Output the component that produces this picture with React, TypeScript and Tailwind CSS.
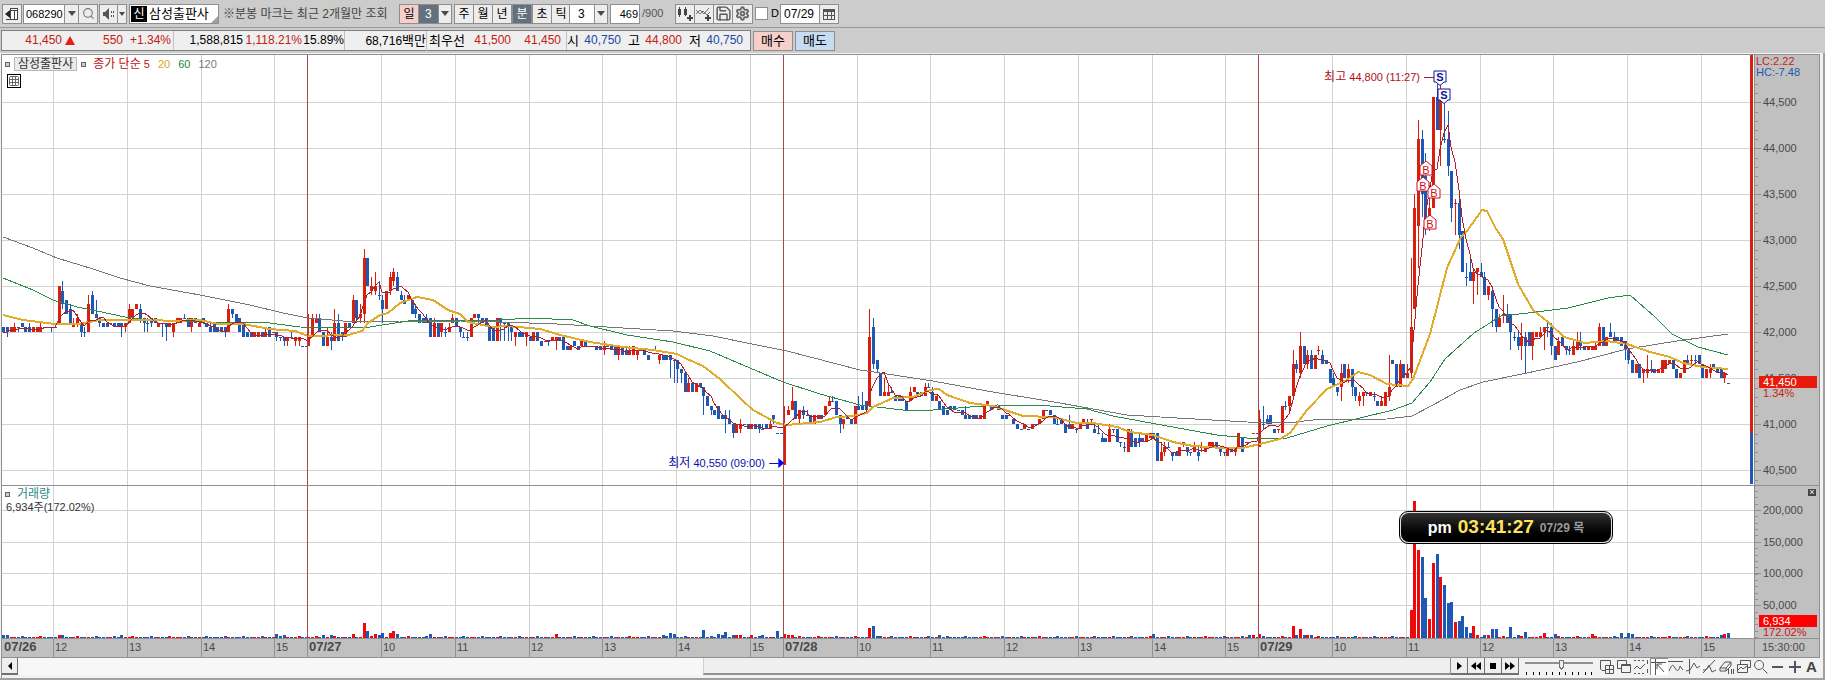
import React from 'react';
import { Search, Settings, Save, Calendar, Grid3x3 } from 'lucide-react';

// Every bar is "open,close[,upper wick,lower wick]" in 50 won steps above 40,000.
const DAY_26 =
    '41,40 41,40,0,1 40,41 40,41,1 41,41,0,1 42,41 41,40 41,40,1 40,41 40,41 40,41,1 41,41 41,41 41,41,0,1 41,41 42,50 49,46,2,1 47,44 45,42,1 41,42,1 42,43,1,1 42,40,0,1 40,40,1,1 40,46,2 48,44,1 44,43,3 43,42,0,1 42,41 42,41 42,42 42,41 42,41 42,41,0,2 41,42,0,1 42,45,1 43,45 45,46 45,43,1,1 43,42,0,2 42,42,1,2 43,42,0,1 43,42 41,42 42,42,0,3 42,41,0,3 41,42 40,42,0,1 42,43 42,43 43,43,1 43,41 41,43,0,1 43,42 41,42 43,42 42,41 41,40,1 42,40 41,40 41,40 41,40,0,1 40,45,1 45,44,0,1 44,42 43,40 42,39 40,39 40,39 39,40 39,40 40,39 39,40,1 41,39 40,40 40,39,0,1 39,39,0,1 39,38,0,1 38,39,0,1 39,39,1 38,39,0,1 38,39,0,1 37,37 37,37';
const DAY_27 =
    '37,39,5 39,43,1 42,43,1 43,40,1 40,37 37,39,2 39,38,1,2 38,42,3 42,38,2 40,39,0,1 39,42 42,41 42,47,1 47,43,0,1 43,44,2,1 44,56,2,2 56,50 49,50,2,1 49,50,3,1 48,48,3,1 47,45,1,3 45,49 49,52,1,1 51,53,1,1 52,49,1 48,47,1 47,46,1 47,48 47,44 45,44,1,1 44,42 43,42 43,42,1 43,39 39,42,1 42,39 40,42,0,1 40,40,1,1 40,41,1 42,43,1 43,41 41,40,0,1 39,39,1 39,39,1,1 39,43 43,44 44,43,0,1 43,42 43,41 41,38 41,38 38,43 43,42,0,4 42,42,0,4 42,41,0,3 41,40,0,2 39,40,0,2 40,39 40,39 39,40,0,2 39,38 38,40 40,38 38,37 38,38 38,38,0,1 38,39 38,39,0,2 39,38 39,36 37,36 36,37 38,37 37,36 37,38 38,37 37,37 37,37 37,36 37,36 36,37,1,1 37,37 37,36 37,35 35,37,0,1 37,35 36,35,1 35,36,1 35,37 35,36,0,1 36,36 36,35 35,34 36,36 36,36,1 34,35,0,1 35,34 35,34 35,34,0,4 34,34,0,5 34,32,0,3 32,31,0,2 31,27 27,29,1 29,27 27,29 29,28 28,26,0,4 26,24 24,23,0,1 23,22 24,21 22,21 22,21,1,3 21,20,2 20,18,0,1 18,20 19,20,1,1 20,20 20,19 19,20 20,19 20,19,0,1 19,19,1 20,19 19,20,1 22,21,0,1 18,18 18,18';
const DAY_28 =
    '11,20,4 22,23,1 23,25,3 25,21 21,23,0,1 23,22,1,1 22,22,1 22,20 20,22 21,22 22,21 22,24 24,25,1 25,25,1 25,22 22,20,0,2 20,21,0,1 22,21 21,20 20,24 24,23,2 24,23,3 25,23 24,39,6 41,33,2,1 34,32,0,1 31,26 26,27,3 26,27,2 27,27,1 26,25 26,25 26,25 25,23 25,27,1 27,28 27,26 27,26 26,28,1 28,28,1 27,25,1 25,26 25,23 24,22 23,22 24,23 24,23 23,23 23,22 22,21,2 22,21 22,21 22,21 21,22 21,24 24,25 24,23 24,24 24,23 22,21 22,21 22,22 21,20 20,19 19,19 19,20 19,19 19,20 20,20 20,21 21,23 23,23 23,22 22,20 20,20,1 21,20 20,18 20,19,2 19,20 19,19,0,1 19,20 20,21 20,19,1 21,21,0,1 19,18,1 18,18,2 17,16,1 17,16 16,19,1 19,19,0,1 19,16 16,16,0,1 15,15,1,1 14,19 18,15,1 17,15 17,16,1,1 17,16 16,18 17,18 18,17 18,12 12,14,2 14,15,1,1 15,15,1 14,13,0,1 14,13 13,15 16,16,0,1 15,14,0,1 14,14,0,1 14,15,1 14,13,1,1 15,15,1,1 14,15 15,16 15,16 16,15 15,14,0,1 14,14,0,1 13,15 15,14 14,15,0,1 15,18 17,14 16,16 16,16 18,18 18,18';
const DAY_29 =
    '15,21,2 20,20,4,1 21,20,1 22,20 19,18 19,19,0,1 18,24 24,24,1,1 24,26,0,1 26,33,3 33,32,1,1 31,37,3,1 37,33 33,35,1,1 35,32,1 32,35 36,36,1,1 35,33,1 34,33 32,29 30,28,1 28,27,0,1 28,31,2,3 33,30 30,32,1,1 32,28,0,2 28,26,0,1 25,26,1,1 26,27,0,2 27,27,0,1 26,27 26,26,1,1 25,24 24,25,1 24,27 26,28,7,1 34,33 33,28 28,33,1 33,30 30,31,2 31,41,15,1 45,67,3 63,82,4,9 82,70,2,5 74,65,5,4 65,67,5,3 67,91 91,84,3 84,92,4,8 82,82,9,1 82,76,6,2 75,67,0,3 68,68,1,7 68,61,2,3 62,53 52,52,3,2 53,51,4 51,53,1,5 53,54,0,5 53,52,2 52,48,1 48,50,0,1 49,45,1,4 45,41,0,1 41,43,1 44,44,4,2 44,42,2 44,40,0,4 39,39,1,1 39,37,1,1 37,39,3,3 39,37,1,6 40,37 37,40,0,3 39,40 39,40,1 40,41,0,4 41,41,1,2 41,37,1,2 37,34 35,38,1 39,37 37,36,0,1 36,36,1,1 35,37,1 36,38,2 38,37,2,1 37,36 36,37 36,37 36,37,1 37,41,1 41,37 37,39 40,39,2 39,38,1 39,38 39,37 38,36,0,2 36,34,0,1 34,31 31,33 33,30 31,32,0,2 31,32,3,1 32,32,2,1 32,31 31,32 31,34 32,34 33,34 34,32 32,30 30,31 31,34 34,33,1 34,34,1,1 34,34,1,1 35,33 33,30 30,32 31,32,1,1 33,32 32,31 32,30 30,31,0,1 29,29';

// Volume bars that stand out, keyed by bar number of the session (height in px).
const VOLUMES: Record<number, number>[] = [
    { 0: 3, 1: 3, 15: 3, 16: 3, 32: 3, 74: 4, 76: 3 },
    { 4: 3, 6: 3, 12: 4, 15: 15, 16: 7, 18: 4, 19: 3, 20: 5, 22: 5, 23: 7, 24: 4, 33: 4, 67: 4, 96: 3, 98: 5, 99: 4, 107: 8, 109: 2, 111: 4, 112: 3, 113: 6, 115: 3, 116: 3, 117: 3, 120: 3, 123: 3, 127: 7 },
    { 0: 4, 1: 3, 2: 3, 23: 10, 24: 12, 25: 2, 26: 2, 42: 3, 100: 4, 126: 3, 127: 3 },
    { 0: 4, 1: 2, 9: 12, 10: 3, 11: 9, 12: 3, 13: 3, 14: 3, 41: 28, 42: 137, 43: 88, 44: 81, 45: 40, 46: 19, 47: 75, 48: 84, 49: 61, 50: 53, 51: 35, 52: 36, 53: 16, 54: 17, 55: 22, 56: 11, 57: 5, 58: 12, 59: 3, 61: 3, 62: 3, 63: 9, 64: 9, 68: 11, 70: 3, 72: 6, 77: 5, 80: 4, 90: 4, 98: 5, 100: 5, 101: 4, 125: 3, 126: 4, 127: 5 },
];

const MA20 =
    '3,315 23,320 47,323 55,324 78,324 100,320 153,320 173,321 200,320 218,324 243,324 270,329 295,331 308,336 348,335 362,331 368,323 380,315 388,313 400,303 417,297 433,300 448,310 460,314 468,322 492,327 507,326 540,329 560,335 590,342 623,347 653,350 677,354 687,359 703,366 720,379 743,401 753,410 777,423 787,425 820,422 837,417 853,416 867,413 873,407 893,398 913,397 930,390 939,389 947,395 970,403 993,406 1023,416 1053,417 1077,423 1093,423 1117,427 1130,432 1153,435 1173,442 1193,446 1223,448 1243,448 1260,444 1280,439 1290,433 1307,410 1327,389 1347,380 1358,372 1370,375 1387,384 1408,386 1413,379 1430,334 1447,268 1461,237 1467,231 1482,210 1487,211 1496,229 1503,239 1518,284 1533,310 1548,322 1564,337 1585,343 1607,341 1627,344 1650,352 1670,357 1683,363 1703,367 1728,369';
const MA60 =
    '3,278 33,290 53,300 77,307 97,311 125,317 150,320 210,322 262,322 300,327 345,328 370,327 395,323 415,320 460,320 500,320 530,318 573,320 590,326 627,335 673,342 710,351 750,368 783,382 820,394 860,405 903,410 933,410 970,407 997,405 1050,406 1087,409 1113,416 1167,426 1217,435 1247,438 1287,438 1327,426 1360,418 1393,410 1412,403 1430,382 1445,359 1474,333 1501,316 1528,313 1568,308 1608,298 1630,295 1655,317 1672,334 1698,347 1728,355';
const MA120 =
    '3,237 33,248 57,258 93,269 120,278 150,286 200,295 250,305 283,313 308,318 355,322 400,321 460,321 500,322 557,324 623,328 673,331 713,336 747,343 787,351 860,370 887,374 933,381 987,391 1060,403 1093,409 1127,415 1177,418 1247,422 1287,423 1313,420 1387,419 1412,416 1433,405 1460,390 1483,382 1527,373 1577,362 1627,349 1677,341 1728,334';

const RED = '#d8200f';
const BLUE = '#1c58b4';
const LEFT = 2;
const WIDTH = 1752;
const STEP = 3.69;

const HOURS = [
    { x: 2, label: '07/26', day: true },
    { x: 53, label: '12' },
    { x: 127, label: '13' },
    { x: 201, label: '14' },
    { x: 274, label: '15' },
    { x: 307, label: '07/27', day: true },
    { x: 381, label: '10' },
    { x: 455, label: '11' },
    { x: 529, label: '12' },
    { x: 602, label: '13' },
    { x: 676, label: '14' },
    { x: 750, label: '15' },
    { x: 783, label: '07/28', day: true },
    { x: 857, label: '10' },
    { x: 930, label: '11' },
    { x: 1004, label: '12' },
    { x: 1078, label: '13' },
    { x: 1152, label: '14' },
    { x: 1225, label: '15' },
    { x: 1258, label: '07/29', day: true },
    { x: 1332, label: '10' },
    { x: 1406, label: '11' },
    { x: 1480, label: '12' },
    { x: 1553, label: '13' },
    { x: 1627, label: '14' },
    { x: 1701, label: '15' },
];

const priceY = (step: number) => Math.round(332 - (step - 40) * 4.6);
const percent = (x: number) => `${((x - LEFT) / WIDTH) * 100}%`;

const parseDay = (text: string, start: number, day: number) =>
    text.split(' ').map((token, i) => {
        const [open, close, up = 0, down = 0] = token.split(',').map(Number);
        return {
            x: Math.round(start + i * STEP),
            open,
            close,
            high: Math.max(open, close) + up,
            low: Math.min(open, close) - down,
            volume: VOLUMES[day][i] ?? ((i * 7 + day) % 5 === 0 ? 2 : 1),
        };
    });

const bars = [
    ...parseDay(DAY_26, 3.3, 0),
    ...parseDay(DAY_27, 308.4, 1),
    ...parseDay(DAY_28, 784.4, 2),
    ...parseDay(DAY_29, 1259.4, 3),
];

const barColor = (i: number) => {
    const bar = bars[i];
    if (bar.close !== bar.open) return bar.close > bar.open ? RED : BLUE;
    return i > 0 && bar.close > bars[i - 1].close ? RED : BLUE;
};

const MA5 = bars
    .map((bar, i) => {
        const part = bars.slice(Math.max(0, i - 4), i + 1);
        const mean = part.reduce((sum, b) => sum + b.close, 0) / part.length;
        return `${bar.x},${priceY(mean)}`;
    })
    .join(' ');

const GridLines = ({ rows, top, height }: { rows: number[]; top: number; height: number }) => (
    <g>
        {HOURS.slice(1)
            .filter((h) => !h.day)
            .map((h) => (
                <rect key={h.x} x={h.x} y={top} width={1} height={height} fill="#d2d2d2" />
            ))}
        {rows.map((y) => (
            <rect key={y} x={LEFT} y={y} width={WIDTH} height={1} fill="#d2d2d2" />
        ))}
    </g>
);

const DayLines = ({ top, height }: { top: number; height: number }) => (
    <g>
        {[307, 783, 1258].map((x) => (
            <rect key={x} x={x} y={top} width={1} height={height} fill="#a84848" />
        ))}
    </g>
);

const PriceChart = () => (
    <svg
        viewBox="2 55 1752 430"
        preserveAspectRatio="none"
        shapeRendering="crispEdges"
        className="block h-[430px] w-full"
    >
        <GridLines rows={[102, 148, 194, 240, 286, 332, 378, 424, 470]} top={55} height={430} />
        {bars.map((bar, i) => {
            const top = priceY(Math.max(bar.open, bar.close));
            const bottom = priceY(Math.min(bar.open, bar.close));
            const high = priceY(bar.high);
            return (
                <g key={i} fill={barColor(i)}>
                    <rect x={bar.x} y={high} width={1} height={Math.max(1, priceY(bar.low) - high)} />
                    <rect x={bar.x - 1} y={top} width={3} height={Math.max(1, bottom - top)} />
                </g>
            );
        })}
        <g fill="none">
            <polyline points={MA120} stroke="#777" />
            <polyline points={MA60} stroke="#2b8a4b" />
            <polyline points={MA20} stroke="#e0ab28" strokeWidth={2} />
            <polyline points={MA5} stroke="#b01f2a" />
        </g>
        <DayLines top={55} height={430} />
        <rect x={1750} y={55} width={3} height={378} fill={RED} />
        <rect x={1750} y={433} width={3} height={51} fill={BLUE} />
    </svg>
);

const VolumeChart = () => (
    <svg
        viewBox="2 486 1752 152"
        preserveAspectRatio="none"
        shapeRendering="crispEdges"
        className="block h-[152px] w-full"
    >
        <GridLines rows={[510, 542, 573, 605]} top={486} height={152} />
        {bars.map((bar, i) => (
            <rect
                key={i}
                x={bar.x - 1}
                y={638 - bar.volume}
                width={3}
                height={bar.volume}
                fill={barColor(i) === RED ? '#ee0a0a' : BLUE}
            />
        ))}
        <DayLines top={486} height={152} />
    </svg>
);

const Marker = ({ x, y, type }: { x: number; y: number; type: 'B' | 'S' }) => (
    <div
        className={`absolute -ml-[7px] flex h-4 w-[14px] justify-center ${type === 'B' ? 'text-[#d0101c]' : 'text-[#10109a]'}`}
        style={{ left: percent(x), top: y }}
    >
        <svg viewBox="0 0 14 16" className="absolute inset-0 h-4 w-[14px]">
            <path
                d={type === 'B' ? 'M7 1 L13 6 V15 H1 V6 Z' : 'M1 1 H13 V12 H11 L7 15.5 L3 12 H1 Z'}
                fill="#fff"
                stroke="currentColor"
                strokeWidth={1}
            />
        </svg>
        <span
            className={`relative text-[11px] leading-3 ${type === 'B' ? 'pt-1' : 'pt-px font-bold'}`}
        >
            {type}
        </span>
    </div>
);

const Axis = ({
    labels,
    ticks,
    className,
    children,
}: {
    labels: { y: number; text: string }[];
    ticks: number[];
    className: string;
    children?: React.ReactNode;
}) => (
    <div
        className={`relative w-[66px] shrink-0 border-l border-r border-[#909090] bg-[#c0c0c0] text-[#4a4a4a] ${className}`}
    >
        {ticks.map((y) => (
            <div key={y} className="absolute left-0 h-px w-[3px] bg-[#909090]" style={{ top: y }} />
        ))}
        {labels.map(({ y, text }) => (
            <div key={text} className="absolute left-0 flex h-3 items-center gap-[2px]" style={{ top: y - 6 }}>
                <i className="h-px w-[6px] bg-[#909090]" />
                {text}
            </div>
        ))}
        {children}
    </div>
);

const ToolButton = ({
    label,
    className = '',
    children,
}: {
    label?: string;
    className?: string;
    children: React.ReactNode;
}) => (
    <button
        aria-label={label}
        className={`flex h-5 items-center justify-center border border-[#8e8e8e] ${className || 'w-5 bg-[#ededed]'}`}
    >
        {children}
    </button>
);

const Caret = () => <i className="border-x-4 border-t-[5px] border-x-transparent border-t-[#4a4a4a]" />;

const CycleSelect = ({ label, className, width }: { label: string; className: string; width: string }) => (
    <div className={`relative -ml-px h-5 border border-[#8e8e8e] ${width}`}>
        <select
            aria-label={label}
            defaultValue="3"
            className={`block h-full w-full appearance-none text-[12px] leading-4 outline-none ${className}`}
        >
            <option>1</option>
            <option>3</option>
            <option>5</option>
        </select>
        <span className="pointer-events-none absolute inset-y-0 right-0 flex w-[13px] items-center justify-center border-l border-[#8e8e8e] bg-[#ededed]">
            <Caret />
        </span>
    </div>
);

const PERIODS = ['주', '월', '년', '분', '초', '틱'];

const Toolbar = () => (
    <div className="flex h-7 items-center border-b border-[#9a9a9a] pl-[2px] text-[12px] text-black">
        <ToolButton label="패널">
            <svg viewBox="0 0 14 14" className="h-[14px] w-[14px] shrink-0" fill="none" stroke="#444">
                <rect x="5.5" y="1.5" width="7" height="11" fill="#fff" />
                <path d="M5.5 3.5h7M9.5 3.500v9M1 12.500h5" />
                <path d="M5 3v8L0 7z" fill="#222" stroke="none" />
            </svg>
        </ToolButton>
        <input
            aria-label="종목코드"
            defaultValue="068290"
            className="ml-px h-5 w-[42px] border border-[#8e8e8e] bg-white pl-[2px] text-[11px] outline-none"
        />
        <ToolButton label="종목 목록" className="-ml-px w-[15px] bg-[#ededed]">
            <Caret />
        </ToolButton>
        <ToolButton label="종목 검색" className="-ml-px w-5 bg-[#ededed]">
            <Search size={13} color="#777" />
        </ToolButton>
        <ToolButton label="소리" className="ml-px w-[19px] bg-[#ededed]">
            <svg viewBox="0 0 14 14" className="h-[14px] w-[14px] shrink-0" fill="#555">
                <path d="M1 5h2l4-4v12L3 9H1zM9 4h1v2H9zM11 4h1v2h-1zM9 8h1v2H9zM11 8h1v2h-1z" />
            </svg>
        </ToolButton>
        <ToolButton label="소리 설정" className="-ml-px w-[10px] bg-[#ededed]">
            <i className="border-x-[3px] border-t-4 border-x-transparent border-t-[#4a4a4a]" />
        </ToolButton>
        <div className="relative ml-[2px] flex h-5 w-[90px] items-center border border-[#8e8e8e] bg-white pl-px">
            <span className="flex h-4 w-4 items-center justify-center bg-black text-white">신</span>
            <span className="pl-[2px] text-[13px]">삼성출판사</span>
            <i className="absolute right-0 bottom-0 border-b-[7px] border-l-[7px] border-b-[#a0a0a0] border-l-transparent" />
        </div>
        <span className="w-[180px] pl-1 whitespace-nowrap text-[#444]">※분봉 마크는 최근 2개월만 조회</span>
        <ToolButton className="w-5 bg-[#f5cfca]">일</ToolButton>
        <CycleSelect label="일 주기" className="bg-[#63707d] pl-[6px] text-white" width="w-[34px]" />
        <div className="ml-[2px] flex">
            {PERIODS.map((period) => (
                <ToolButton
                    key={period}
                    className={period === '분' ? 'ml-px w-5 bg-[#63707d] text-white' : '-mr-px w-5 bg-[#ededed]'}
                >
                    {period}
                </ToolButton>
            ))}
        </div>
        <CycleSelect label="분 주기" className="bg-white pl-2" width="w-[39px]" />
        <input
            aria-label="봉 개수"
            defaultValue="469"
            className="ml-[2px] h-5 w-[30px] border border-[#8e8e8e] bg-white pr-px text-right text-[11px] outline-none"
        />
        <span className="w-[35px] pl-[2px] text-[11px] text-[#555]">/900</span>
        <ToolButton label="봉 추가">
            <svg viewBox="0 0 16 16" className="h-4 w-4 shrink-0" fill="#444">
                <path d="M1 3h3v6H1zM2 1h1v10H2zM7 3h3v6H7zM8 1h1v9H8zM10 11h2v-2h2v2h2v2h-2v2h-2v-2h-2z" />
            </svg>
        </ToolButton>
        <ToolButton label="지표 추가" className="-ml-px w-5 bg-[#ededed]">
            <svg viewBox="0 0 16 16" className="h-4 w-4 shrink-0" fill="none" stroke="#777">
                <path d="M0 8l4-4 4 4 5-6M0 4l4 4 3-3 4 4 3-3" />
                <path d="M9 12h6M12 9v6" stroke="#444" strokeWidth="2" />
            </svg>
        </ToolButton>
        <ToolButton label="저장" className="-ml-px w-5 bg-[#ededed]">
            <Save size={17} color="#555" strokeWidth={2} className="shrink-0" />
        </ToolButton>
        <ToolButton label="설정" className="-ml-px w-[21px] bg-[#ededed]">
            <Settings size={15} color="#666" strokeWidth={3} className="shrink-0" />
        </ToolButton>
        <label className="ml-[2px] flex items-center gap-[3px] text-[11px]">
            <input type="checkbox" className="h-[13px] w-[13px] appearance-none border border-[#8e8e8e] bg-white" />
            D
        </label>
        <input
            aria-label="날짜"
            defaultValue="07/29"
            className="ml-px h-5 w-10 border border-[#8e8e8e] bg-white pl-[3px] text-[12px] outline-none"
        />
        <ToolButton label="달력" className="-ml-px w-5 bg-[#ededed]">
            <svg viewBox="0 0 12 12" className="h-3 w-3 shrink-0" fill="none" stroke="#555" shapeRendering="crispEdges">
                <path d="M0 1h12v3H0z" fill="#555" stroke="none" />
                <path d="M.5 1.500h11v10H.5zM.5 7.500h11M4.500 4v7M8.500 4v7" />
            </svg>
        </ToolButton>
    </div>
);

const QuoteBar = () => (
    <div className="flex h-[25px] items-center gap-[2px] pl-px text-[12px] text-black">
        <div className="flex h-[21px] items-center border border-[#808080] bg-[#efefef] leading-[19px] whitespace-nowrap">
            <div className="flex w-[172px] items-center border-r border-[#c0c0c0] text-[#c22014]">
                <span className="w-[60px] text-right">41,450</span>
                <i className="ml-[3px] border-x-[5px] border-b-[9px] border-x-transparent border-b-[#e02010]" />
                <span className="w-12 text-right">550</span>
                <span className="w-12 text-right">+1.34%</span>
            </div>
            <div className="flex w-[171px] border-r border-[#c0c0c0]">
                <span className="w-[69px] text-right">1,588,815</span>
                <span className="w-[59px] text-right text-[#c22014]">1,118.21%</span>
                <span className="w-[42px] text-right">15.89%</span>
            </div>
            <div className="w-[82px] border-r border-[#c0c0c0] text-right">
                68,716<span className="text-[13px]">백만</span>
            </div>
            <div className="flex w-[140px] border-r border-[#c0c0c0] pl-[2px]">
                <span className="w-9 text-[13px]">최우선</span>
                <span className="w-[46px] text-right text-[#c22014]">41,500</span>
                <span className="w-[50px] text-right text-[#c22014]">41,450</span>
            </div>
            <div className="flex w-[183px]">
                <span className="w-[14px] text-[13px]">시</span>
                <span className="w-10 text-right text-[#1c4aa6]">40,750</span>
                <span className="ml-[7px] w-[14px] text-[13px]">고</span>
                <span className="w-10 text-right text-[#c22014]">44,800</span>
                <span className="ml-[7px] w-[14px] text-[13px]">저</span>
                <span className="w-10 text-right text-[#1c4aa6]">40,750</span>
            </div>
        </div>
        <button className="h-5 w-10 border border-[#8e8e8e] bg-[#f5cfca] text-[13px] leading-4">매수</button>
        <button className="h-5 w-10 border border-[#8e8e8e] bg-[#c5dcf3] text-[13px] leading-4">매도</button>
    </div>
);

const Square = () => <i className="h-[5px] w-[5px] border border-[#666] bg-[#ccc]" />;

const PricePanel = () => (
    <div className="flex h-[431px] border-b border-[#909090]">
        <div className="relative min-w-0 flex-1 bg-white">
            <PriceChart />
            <div className="absolute top-[2px] left-[3px] flex items-center gap-1 text-[11px] leading-3">
                <Square />
                <span className="border border-[#b8b8b8] bg-[#ebebeb] px-[3px] text-[12px] text-[#333]">삼성출판사</span>
                <Square />
                <span className="pl-[3px] text-[#c01020]">
                    <span className="text-[12px]">종가 단순</span> 5
                </span>
                <span className="pl-1 text-[#d9a520]">20</span>
                <span className="pl-1 text-[#1c8a3c]">60</span>
                <span className="pl-1 text-[#777]">120</span>
            </div>
            <button
                aria-label="표 보기"
                className="absolute top-[19px] left-[5px] flex h-[14px] w-[14px] items-center justify-center border border-black bg-white"
            >
                <Grid3x3 size={12} color="#666" strokeWidth={2} className="shrink-0" />
            </button>
            <div
                className="absolute top-[14px] flex -translate-x-full items-center gap-1 text-[11px] leading-4 whitespace-nowrap text-[#b01020]"
                style={{ left: percent(1434) }}
            >
                <span>
                    <span className="text-[12px]">최고</span> 44,800 (11:27)
                </span>
                <i className="h-px w-[10px] bg-[#b01020]" />
            </div>
            <div
                className="absolute top-[400px] flex -translate-x-full items-center text-[11px] leading-4 whitespace-nowrap text-[#0c0cb0]"
                style={{ left: percent(784) }}
            >
                <span className="pr-1">
                    <span className="text-[12px]">최저</span> 40,550 (09:00)
                </span>
                <i className="h-px w-[9px] bg-[#0c0cb0]" />
                <i className="border-y-[5px] border-l-[6px] border-y-transparent border-l-[#0505f0]" />
            </div>
            <Marker x={1426} y={105} type="B" />
            <Marker x={1423} y={121} type="B" />
            <Marker x={1434} y={128} type="B" />
            <Marker x={1430} y={159} type="B" />
            <Marker x={1440} y={15} type="S" />
            <Marker x={1444} y={33} type="S" />
        </div>
        <Axis
            className="text-[11px]"
            ticks={Array.from({ length: 44 }, (_, i) => 29 + Math.round(i * 9.2)).filter((y) => y < 428)}
            labels={[44500, 44000, 43500, 43000, 42500, 42000, 41500, 41000, 40500].map((price, i) => ({
                y: 47 + i * 46,
                text: price.toLocaleString('en-US'),
            }))}
        >
            <div className="absolute top-px left-px leading-[11px]">
                <div className="text-[#c81e14]">LC:2.22</div>
                <div className="text-[#1c58b4]">HC:-7.48</div>
            </div>
            <div className="absolute top-[321px] left-1 h-3 w-[58px] bg-[#e81a0a] pl-1 leading-3 text-white">
                41,450
            </div>
            <div className="absolute top-[333px] left-2 leading-[10px] text-[#c81e14]">1.34%</div>
        </Axis>
    </div>
);

const Clock = () => (
    <div
        className="absolute top-[25px] flex h-[33px] w-[214px] items-center justify-center rounded-[9px] border border-black bg-[#ddd] p-px"
        style={{ left: percent(1399) }}
    >
        <div className="flex h-full w-full items-center justify-center gap-[6px] rounded-lg bg-linear-to-b from-[#333] to-black font-bold">
            <span className="text-[16px] text-white">pm</span>
            <span className="text-[19px] text-[#ffe45a]">03:41:27</span>
            <span className="text-[12px] text-[#9a9a9a]">07/29 목</span>
        </div>
    </div>
);

const VolumePanel = () => (
    <div className="flex h-[153px] border-b border-[#909090]">
        <div className="relative min-w-0 flex-1 bg-white">
            <VolumeChart />
            <div className="absolute top-[2px] left-[3px] flex items-center gap-[7px] text-[12px] leading-3 text-[#2b8a8a]">
                <Square />
                거래량
            </div>
            <div className="absolute top-[15px] left-1 text-[11px] leading-3 text-[#333]">6,934주(172.02%)</div>
            <Clock />
        </div>
        <Axis
            className="text-[11px]"
            ticks={Array.from({ length: 24 }, (_, i) => 5 + Math.round(i * 6.35))}
            labels={[
                { y: 24, text: '200,000' },
                { y: 56, text: '150,000' },
                { y: 87, text: '100,000' },
                { y: 119, text: '50,000' },
            ]}
        >
            <button
                aria-label="닫기"
                className="absolute top-[3px] right-[3px] flex h-[7px] w-2 items-center justify-center bg-[#444] text-[9px] leading-[7px] text-white"
            >
                ×
            </button>
            <div className="absolute top-[129px] left-1 h-3 w-[58px] bg-[#ff0000] pl-1 leading-3 text-white">6,934</div>
            <div className="absolute top-[141px] left-2 leading-[10px] text-[#d01010]">172.02%</div>
        </Axis>
    </div>
);

const TimeAxis = () => (
    <div className="flex h-[19px] border-b border-[#909090] bg-[#c0c0c0] text-[11px] leading-4 text-[#4a4a4a]">
        <div className="relative min-w-0 flex-1">
            {HOURS.map((h) => (
                <span
                    key={h.x}
                    className={`absolute inset-y-0 border-l pl-px ${h.day ? 'text-[13px] font-bold' : ''} ${h.x === 2 ? 'border-transparent' : 'border-[#909090]'}`}
                    style={{ left: percent(h.x) }}
                >
                    {h.label}
                </span>
            ))}
        </div>
        <div className="w-[66px] shrink-0 border-x border-[#909090] pl-[7px]">15:30:00</div>
    </div>
);

const PLAYBACK = [
    { label: '재생', path: 'M5 3l5 4-5 4z' },
    { label: '뒤로', path: 'M7 3v8L2 7zM12 3v8L7 7z' },
    { label: '정지', path: 'M4 4h6v6H4z' },
    { label: '앞으로', path: 'M2 3v8l5-4zM7 3v8l5-4z' },
];

const DRAW_TOOLS = [
    { label: '창 추가', path: 'M7 11.500H3L1.500 10V1.500h10v5M6.500 6.500h8v8h-8zM10.500 6.500v8M6.500 10.500h8' },
    { label: '창 겹치기', path: 'M5 9.500H1.500v-8h9v4M5.500 5.500h9v8h-9zM5.500 6.500h9' },
    { label: '구간', path: 'M1 1.500h2m2 0h2m2 0h2M1 14.500h2m2 0h2m2 0h2M1 10l3-3 3 3 5-5M14.500 1v4m0 5v4' },
    { label: '십자선', path: 'M0 3.500h15M4.500 0v16M6 5l7 8M6 5v5M6 5h5', active: true },
    { label: '추세선', path: 'M0 2.500h15M1 12c3-7 4-7 6-3s4 3 5-2l3 4' },
    { label: '수직선', path: 'M4.500 0v15M1 12l4-1 4-7 3 5 3-2' },
    { label: '빗금', path: 'M1 14L13 1M1 11h3l3-5 3 7 4-2' },
    { label: '지우개', path: 'M1 9l5-6h6l-5 6zM1 9v3h6V9m0 3l5-5V3M9.500 10v5m3-5v5m2-5v5' },
    { label: '차트 복사', path: 'M4.500 5v-3.500h10v7H12M1.500 5.500h10v8h-10zM2 11l3-3 2 2 4-3' },
    { label: '돋보기', path: 'M6 1.500a4.500 4.500 0 1 0 .1 0M9.500 9.500l5 5' },
    { label: '축소', path: 'M2 8h11', bold: true },
    { label: '확대', path: 'M2 8h12M8 2v12', bold: true },
];

const BottomBar = () => (
    <div className="flex h-5 items-start bg-[#f2f2f2]">
        <button
            aria-label="왼쪽으로"
            className="flex h-[17px] w-4 items-center justify-center border-r border-b-2 border-[#707070] bg-[#efefef]"
        >
            <i className="border-y-4 border-r-4 border-y-transparent border-r-black" />
        </button>
        <div className="flex h-[17px] min-w-0 flex-1">
            <div className="flex-[686] bg-[#f7f7f7]" />
            <div className="flex-[747] border-r border-b-2 border-l border-[#909090] border-l-[#d0d0d0] bg-[#efefef]" />
        </div>
        {PLAYBACK.map(({ label, path }) => (
            <button
                key={label}
                aria-label={label}
                className="flex h-[17px] w-[17px] items-center justify-center border-r border-b-2 border-[#707070] bg-[#efefef]"
            >
                <svg viewBox="0 0 14 14" className="h-[14px] w-[14px] shrink-0">
                    <path d={path} />
                </svg>
            </button>
        ))}
        <div className="relative ml-[5px] h-[17px] w-[70px]">
            <svg viewBox="0 0 70 17" className="h-[17px] w-[70px]" shapeRendering="crispEdges">
                <path d="M1 5h68" stroke="#909090" strokeWidth={2} />
                {Array.from({ length: 11 }, (_, i) => (
                    <rect key={i} x={2 + Math.round(i * 6.5)} y={14} width={1} height={3} />
                ))}
                <path d="M35.500 2h4v7l-2 2-2-2z" fill="#eee" stroke="#777" />
            </svg>
            <input
                type="range"
                aria-label="배율"
                defaultValue={53}
                className="absolute inset-0 h-full w-full opacity-0"
            />
        </div>
        <div className="flex w-[226px] items-center pl-[5px]">
            {DRAW_TOOLS.map(({ label, path, active, bold }) => (
                <button
                    key={label}
                    aria-label={label}
                    className={`flex h-[17px] flex-1 items-center justify-center ${active ? 'border-t border-l border-[#909090] bg-white' : ''}`}
                >
                    <svg
                        viewBox="0 0 16 16"
                        className="h-4 w-4 shrink-0"
                        fill="none"
                        stroke="#555"
                        strokeWidth={bold ? 2 : 1}
                    >
                        <path d={path} />
                    </svg>
                </button>
            ))}
            <button aria-label="글자" className="flex-1 text-[15px] leading-4 font-bold text-[#444]">
                A
            </button>
        </div>
    </div>
);

const App = () => {
    return (
        <div className="min-h-[680px] bg-[#cccccc] font-['Liberation_Sans','Noto_Sans_CJK_KR',sans-serif]">
            <Toolbar />
            <QuoteBar />
            <div className="border-r-2 border-b-2 border-[#a0a0a0] bg-[#f2f2f2] pt-px pr-[3px] pl-px">
                <div className="border-t border-l border-[#909090]">
                    <PricePanel />
                    <VolumePanel />
                    <TimeAxis />
                    <BottomBar />
                </div>
            </div>
        </div>
    );
};

export default App;
